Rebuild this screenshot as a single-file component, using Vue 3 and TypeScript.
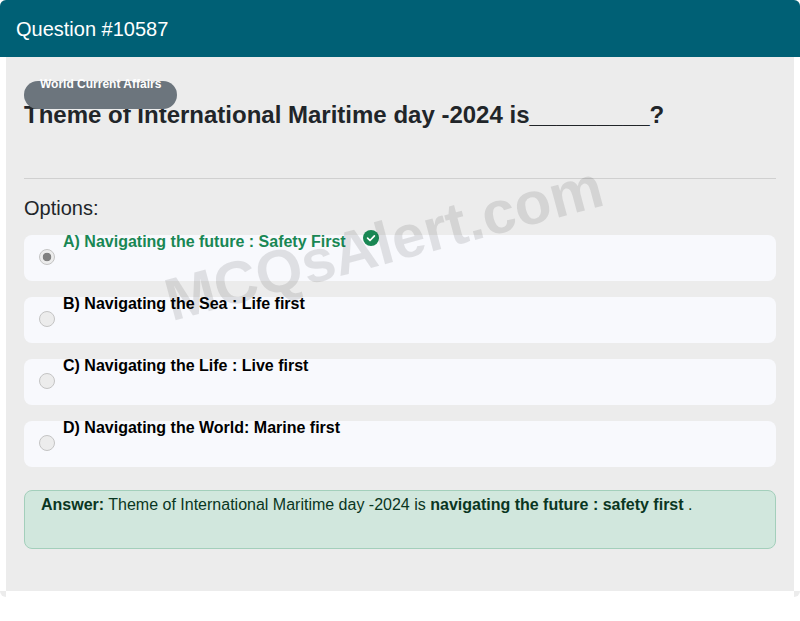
<script setup lang="ts">
interface Option {
  label: string
  correct: boolean
}

const options: Option[] = [
  { label: 'A) Navigating the future : Safety First', correct: true },
  { label: 'B) Navigating the Sea : Life first', correct: false },
  { label: 'C) Navigating the Life : Live first', correct: false },
  { label: 'D) Navigating the World: Marine first', correct: false },
]
</script>

<template>
  <div class="page">
    <article class="card">
      <header class="card-header">Question #10587</header>
      <div class="card-body">
        <span class="badge">World Current Affairs</span>
        <h1 class="title">Theme of International Maritime day -2024 is_________?</h1>
        <hr class="divider" />
        <h2 class="options-title">Options:</h2>
        <div class="options">
          <label v-for="opt in options" :key="opt.label" class="option">
            <input class="radio" type="radio" name="q" :checked="opt.correct" disabled />
            <span class="option-text" :class="{ correct: opt.correct }">{{ opt.label }}</span>
            <svg v-if="opt.correct" class="check" viewBox="0 0 16 16" width="16" height="16" aria-hidden="true">
              <circle cx="8" cy="8" r="8" fill="#198754" />
              <path d="M4.6 8.2 7 10.5 11.4 5.8" fill="none" stroke="#fff" stroke-width="1.7" stroke-linecap="round" stroke-linejoin="round" />
            </svg>
          </label>
        </div>
        <div class="answer">
          <strong>Answer:</strong> Theme of International Maritime day -2024 is
          <strong>navigating the future : safety first</strong> .
        </div>
        <div class="watermark">MCQsAlert.com</div>
      </div>
      <div class="card-foot"></div>
    </article>
  </div>
</template>

<style>
html,
body {
  margin: 0;
  background: #fff;
}
</style>

<style scoped>
.page {
  width: 800px;
  height: 621px;
  font-family: "Liberation Sans", Arial, sans-serif;
  color: #212529;
  overflow: hidden;
}

.card {
  height: 597px;
  display: flex;
  flex-direction: column;
  background: #ececec;
  border-radius: 6px;
  overflow: hidden;
}

.card-header {
  height: 57px;
  flex: none;
  box-sizing: border-box;
  padding: 16px 16px 0;
  background: #006075;
  color: #fff;
  font-size: 20px;
  line-height: 26px;
}

.card-body {
  position: relative;
  height: 534px;
  flex: none;
  box-sizing: border-box;
  padding: 24px 18px 0;
  background: #ececec;
  border: solid #fff;
  border-width: 0 6px;
}

.card-foot {
  flex: 1;
  margin: 0 6px;
  background: #fff;
}

.badge {
  position: absolute;
  left: 18px;
  top: 24px;
  z-index: 1;
  width: 153px;
  height: 28px;
  box-sizing: border-box;
  padding-left: 16px;
  border-radius: 14px;
  background: #6c757d;
  color: #fff;
  font-size: 12px;
  font-weight: 700;
  line-height: 6px;
}

.title {
  margin: 19px 0 0;
  font-size: 24px;
  font-weight: 700;
  line-height: 29px;
}

.divider {
  margin: 49px 0 0;
  border: 0;
  border-top: 1px solid #d0d0d0;
}

.options-title {
  margin: 17px 0 0;
  font-size: 20px;
  font-weight: 400;
  line-height: 24px;
}

.options {
  margin-top: 15px;
  display: flex;
  flex-direction: column;
  gap: 16px;
}

.option {
  height: 46px;
  display: flex;
  align-items: center;
  padding-left: 15px;
  border-radius: 8px;
  background: #f8f9fd;
}

.radio {
  appearance: none;
  flex: none;
  width: 16px;
  height: 16px;
  margin: -2px 8px 0 0;
  box-sizing: border-box;
  border: 1px solid #c4c4c4;
  border-radius: 50%;
  background: #ececec;
}

.radio:checked {
  background: radial-gradient(circle, #808080 0 4px, #ececec 4.6px);
}

.option-text {
  align-self: flex-start;
  margin-top: -5px;
  font-size: 16px;
  font-weight: 700;
  line-height: 24px;
  color: #000;
}

.option-text.correct {
  color: #198754;
}

.check {
  align-self: flex-start;
  flex: none;
  margin: -5px 0 0 17px;
}

.answer {
  margin-top: 23px;
  height: 59px;
  box-sizing: border-box;
  padding: 2px 16px 0;
  border: 1px solid #a3cfbb;
  border-radius: 8px;
  background: #d1e7dd;
  color: #0a3622;
  font-size: 16px;
  line-height: 24px;
}

.watermark {
  position: absolute;
  left: 153px;
  top: 153px;
  width: 440px;
  text-align: center;
  white-space: nowrap;
  transform: rotate(-15deg);
  font-size: 60px;
  font-weight: 700;
  line-height: 70px;
  color: rgba(0, 0, 0, 0.1);
  pointer-events: none;
}
</style>
